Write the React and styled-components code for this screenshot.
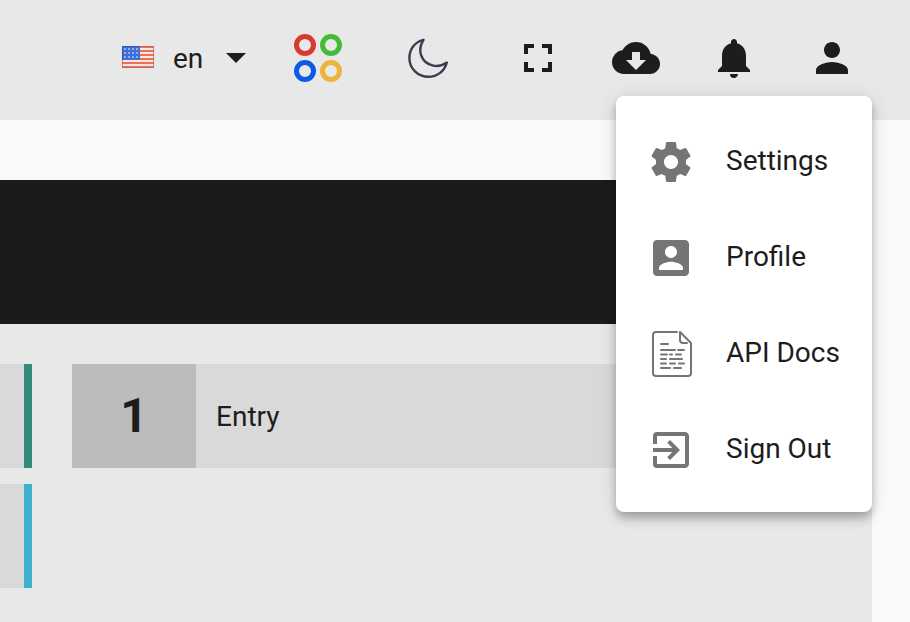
import React from 'react';
import styled, { createGlobalStyle } from 'styled-components';
import {
  MdArrowDropDown,
  MdCloudDownload,
  MdExitToApp,
  MdFullscreen,
  MdNotifications,
  MdPerson,
} from 'react-icons/md';

const GlobalStyle = createGlobalStyle`
  * {
    box-sizing: border-box;
  }

  body {
    margin: 0;
    background: #fafafa;
    color: #1d1d1d;
    font: 400 28px/32px Roboto, sans-serif;
  }
`;

const Page = styled.div`
  position: relative;
  display: flex;
  flex-direction: column;
  min-height: 100vh;
`;

const Toolbar = styled.header`
  display: flex;
  align-items: center;
  justify-content: flex-end;
  height: 120px;
  padding: 0 54px 4px 0;
  background: #e8e8e8;
`;

const ToolGroup = styled.div`
  display: flex;
  align-items: center;
  gap: ${({ $gap }) => $gap}px;
  margin-left: ${({ $offset }) => $offset || 0}px;
`;

const IconButton = styled.button`
  display: flex;
  padding: 0;
  border: 0;
  background: none;
  color: #1d1d1d;
  cursor: pointer;
`;

const Language = styled.label`
  display: flex;
  align-items: center;
  gap: 19px;

  svg {
    margin-bottom: 2px;
  }
`;

const SelectBox = styled.span`
  display: grid;
  align-items: center;
  width: 87px;

  > * {
    grid-area: 1 / 1;
  }

  > svg {
    justify-self: end;
    pointer-events: none;
  }
`;

const Select = styled.select`
  width: 100%;
  height: 48px;
  padding: 2px 0 0;
  border: 0;
  appearance: none;
  background: none;
  color: inherit;
  font: inherit;
`;

const Main = styled.main`
  display: flex;
  flex: 1;
  flex-direction: column;
  margin: 60px 38px 0 0;
  background: #e8e8e8;
`;

const Banner = styled.div`
  height: 144px;
  background: #1b1b1b;
`;

const Columns = styled.div`
  display: grid;
  grid-template-columns: 32px 1fr;
  gap: 40px;
  padding: 40px 40px 34px 0;
`;

const Column = styled.div`
  display: flex;
  flex-direction: column;
  gap: 16px;
`;

const Card = styled.div`
  height: 104px;
  border-right: 8px solid ${({ $accent }) => $accent};
  background: #d9d9d9;
`;

const EntryRow = styled.div`
  display: flex;
  align-items: center;
  gap: 20px;
  height: 104px;
  background: #d9d9d9;
`;

const EntryCount = styled.strong`
  display: flex;
  align-items: center;
  justify-content: center;
  align-self: stretch;
  width: 124px;
  background: #bcbcbc;
  font-size: 48px;
  font-weight: 700;
`;

const EntryLabel = styled.span`
  padding-top: 2px;
`;

const Menu = styled.nav`
  position: absolute;
  top: 96px;
  right: 38px;
  width: 256px;
  padding: 16px 0;
  border-radius: 8px;
  background: #fff;
  box-shadow: 0 4px 8px -2px rgba(0, 0, 0, 0.2), 0 8px 10px rgba(0, 0, 0, 0.14),
    0 2px 20px rgba(0, 0, 0, 0.12);
`;

const MenuItem = styled.button`
  display: flex;
  align-items: center;
  gap: 31px;
  width: 100%;
  height: 96px;
  padding: 2px 0 0 31px;
  border: 0;
  background: none;
  color: inherit;
  font: inherit;
  white-space: nowrap;
  cursor: pointer;

  svg {
    flex: none;
    margin-top: 2px;
    color: #757575;
  }
`;

const FlagIcon = () => (
  <svg width='32' height='22' viewBox='0 0 32 22' aria-hidden='true'>
    <rect width='32' height='22' fill='#fbe6e0' />
    {[0, 4, 8, 12, 16, 20].map(y => (
      <rect key={y} y={y} width='32' height='2' fill='#ee705c' />
    ))}
    <rect width='18' height='14' fill='#3f6fd6' />
    {[3, 7, 11].map(y =>
      [3, 7, 11, 15].map(x => <circle key={`${x}-${y}`} cx={x} cy={y} r='1' fill='#a9c4f5' />)
    )}
    <path d='M18 0.5H31.5V21.5H0.5V14' fill='none' stroke='#a86a54' strokeOpacity='0.7' />
    <path d='M18 0.5H0.5V14' fill='none' stroke='#3455a8' />
  </svg>
);

const AppsIcon = () => (
  <svg width='48' height='48' viewBox='0 0 48 48' fill='none' strokeWidth='5'>
    <circle cx='11' cy='11' r='8.5' stroke='#d83a2e' />
    <circle cx='37' cy='11' r='8.5' stroke='#46bb35' />
    <circle cx='11' cy='37' r='8.5' stroke='#0b5be8' />
    <circle cx='37' cy='37' r='8.5' stroke='#edb33b' />
  </svg>
);

const MoonIcon = () => (
  <svg width='40' height='40' viewBox='0 0 40 40' fill='none' stroke='#3d3b52' strokeWidth='2.4' strokeLinejoin='round'>
    <path d='M15.5 1.8C6.5 4 1.4 11.5 1.4 20C1.4 30.5 10 38.8 20.3 38.8C29.5 38.8 36.5 33 38.8 24.6C34.5 27.6 29.5 28.6 25 27.6C13.5 25 8.5 12.5 15.5 1.8Z' />
  </svg>
);

const SettingsIcon = ({ size }) => (
  <svg width={size} height={size} viewBox='0 0 24 24' fill='currentColor'>
    <path d='M19.43 12.98c.04-.32.07-.64.07-.98s-.03-.66-.07-.98l2.11-1.65c.19-.15.24-.42.12-.64l-2-3.46c-.12-.22-.39-.3-.61-.22l-2.49 1c-.52-.4-1.08-.73-1.69-.98l-.38-2.65C14.46 2.18 14.25 2 14 2h-4c-.25 0-.46.18-.49.42l-.38 2.65c-.61.25-1.17.59-1.69.98l-2.49-1c-.23-.09-.49 0-.61.22l-2 3.46c-.13.22-.07.49.12.64l2.11 1.65c-.04.32-.07.65-.07.98s.03.66.07.98l-2.11 1.65c-.19.15-.24.42-.12.64l2 3.46c.12.22.39.3.61.22l2.49-1c.52.4 1.08.73 1.69.98l.38 2.65c.03.24.24.42.49.42h4c.25 0 .46-.18.49-.42l.38-2.65c.61-.25 1.17-.59 1.69-.98l2.49 1c.23.09.49 0 .61-.22l2-3.46c.12-.22.07-.49-.12-.64l-2.11-1.65zM12 15.5c-1.93 0-3.5-1.57-3.5-3.5s1.57-3.5 3.5-3.5 3.5 1.57 3.5 3.5-1.57 3.5-3.5 3.5z' />
  </svg>
);

const ProfileIcon = ({ size }) => (
  <svg width={size} height={size} viewBox='0 0 24 24' fill='currentColor'>
    <path d='M3 5v14c0 1.1.89 2 2 2h14c1.1 0 2-.9 2-2V5c0-1.1-.9-2-2-2H5c-1.11 0-2 .9-2 2zm12 4c0 1.66-1.34 3-3 3s-3-1.34-3-3 1.34-3 3-3 3 1.34 3 3zm-9 8c0-2 4-3.1 6-3.1s6 1.1 6 3.1v1H6v-1z' />
  </svg>
);

const DocsIcon = ({ size }) => (
  <svg width={size} height={size} viewBox='0 0 48 48' fill='none' stroke='currentColor' strokeWidth='2' strokeLinecap='round' strokeLinejoin='round'>
    <path d='M30 2H9Q6 2 6 5V43Q6 46 9 46H41Q44 46 44 43V13L33 2V10Q33 13 36 13H40' />
    <path d='M14 14H21M14 20H28M31 20H37M14 24.5H20M23 24.5H25M29 24.5H34M14 29H19M23 29H35M14 33.5H19M23 33.5H28M32 33.5H37M14 38H23M27 38H34' />
  </svg>
);

const MENU = [
  { label: 'Settings', Icon: SettingsIcon },
  { label: 'Profile', Icon: ProfileIcon },
  { label: 'API Docs', Icon: DocsIcon },
  { label: 'Sign Out', Icon: MdExitToApp },
];

const App = () => (
  <Page>
    <GlobalStyle />
    <Toolbar>
      <Language>
        <FlagIcon />
        <SelectBox>
          <Select aria-label='Language' defaultValue='en'>
            <option value='en'>en</option>
          </Select>
          <MdArrowDropDown size={48} />
        </SelectBox>
      </Language>
      <ToolGroup $gap={66} $offset={34}>
        <IconButton aria-label='Apps'>
          <AppsIcon />
        </IconButton>
        <IconButton aria-label='Dark mode'>
          <MoonIcon />
        </IconButton>
      </ToolGroup>
      <ToolGroup $gap={50} $offset={66}>
        <IconButton aria-label='Full screen'>
          <MdFullscreen size={48} />
        </IconButton>
        <IconButton aria-label='Downloads'>
          <MdCloudDownload size={48} />
        </IconButton>
        <IconButton aria-label='Notifications'>
          <MdNotifications size={48} />
        </IconButton>
        <IconButton aria-label='Account' aria-expanded='true'>
          <MdPerson size={48} />
        </IconButton>
      </ToolGroup>
    </Toolbar>
    <Main>
      <Banner />
      <Columns>
        <Column>
          <Card $accent='#328b7b' />
          <Card $accent='#3db0cb' />
        </Column>
        <Column>
          <EntryRow>
            <EntryCount>1</EntryCount>
            <EntryLabel>Entry</EntryLabel>
          </EntryRow>
        </Column>
      </Columns>
    </Main>
    <Menu aria-label='Account'>
      {MENU.map(({ label, Icon }) => (
        <MenuItem key={label}>
          <Icon size={48} />
          {label}
        </MenuItem>
      ))}
    </Menu>
  </Page>
);

export default App;
